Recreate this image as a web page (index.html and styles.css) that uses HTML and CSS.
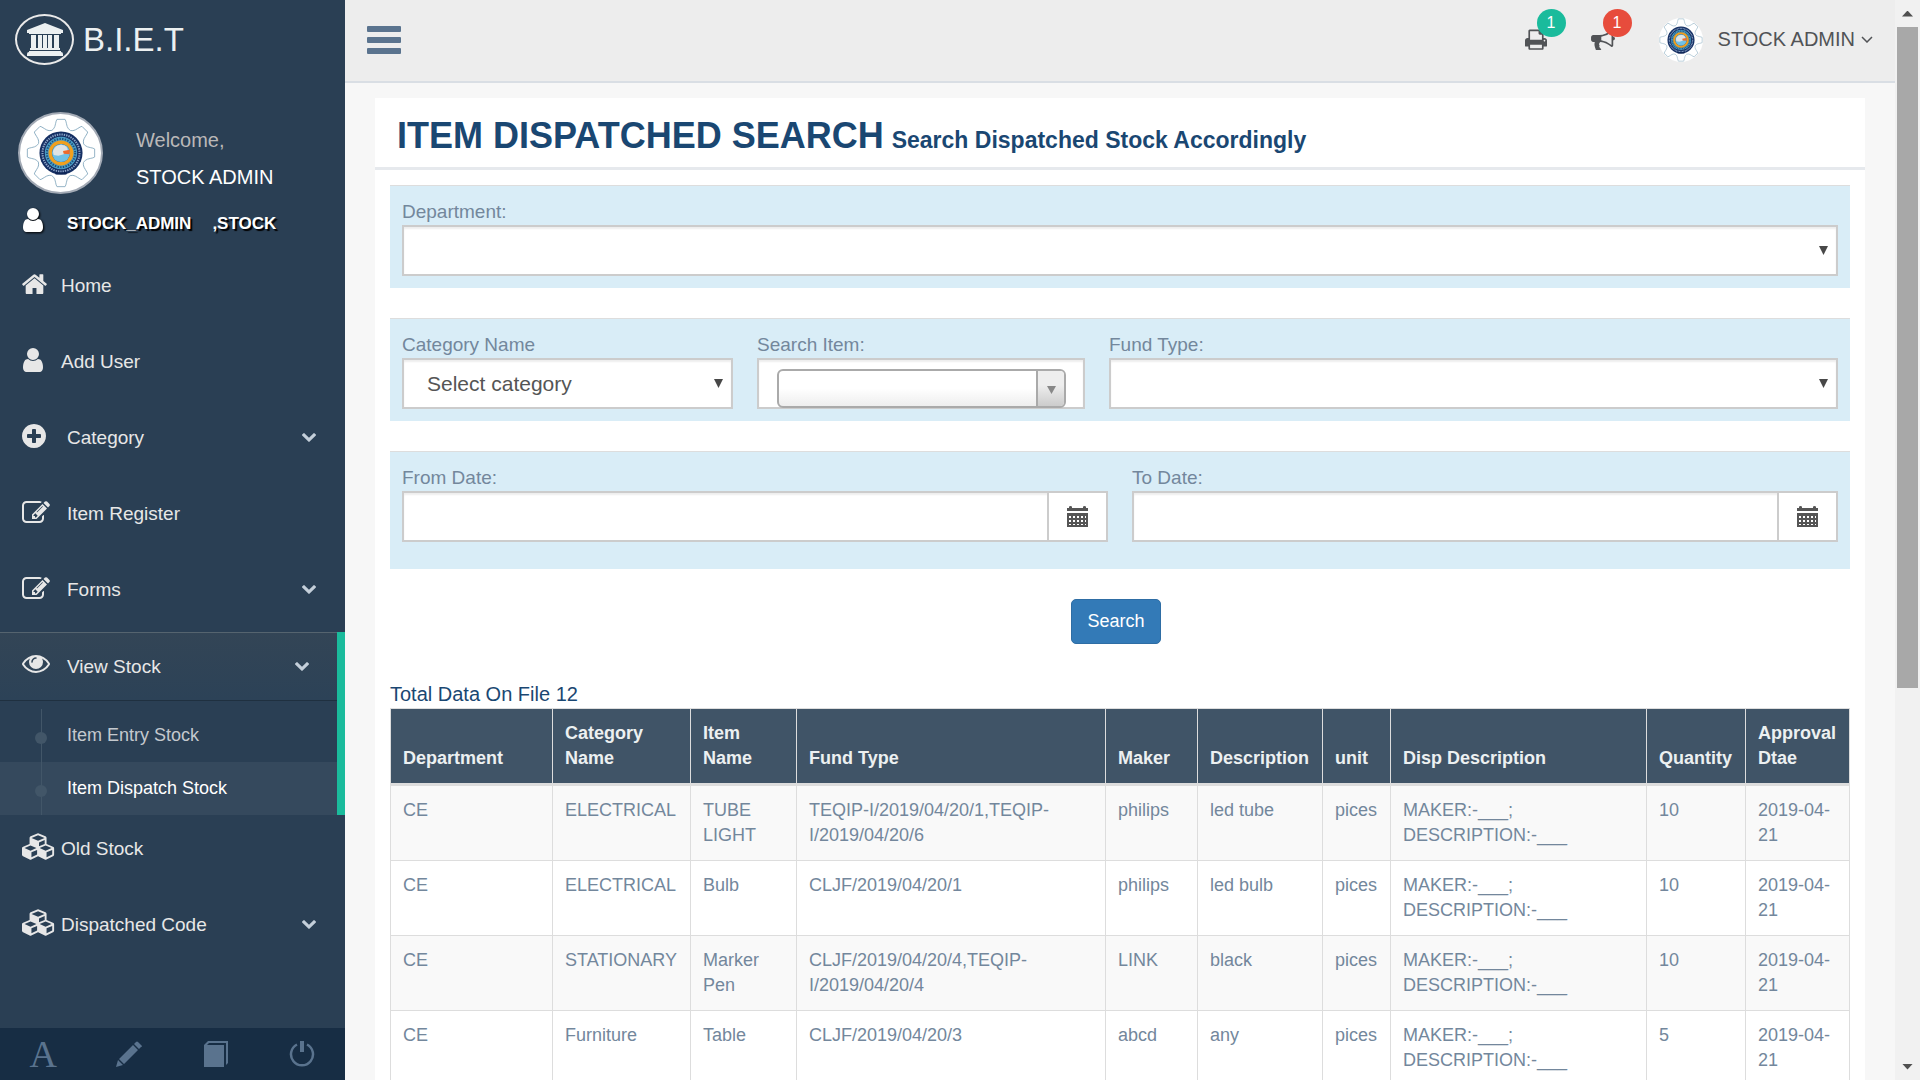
FILE: index.html
```html
<!DOCTYPE html>
<html lang="en">
<head>
<meta charset="utf-8">
<title>Item Dispatched Search</title>
<link rel="stylesheet" href="styles.css">
</head>
<body>
<svg class="sprite" aria-hidden="true">
  <symbol id="crest" viewBox="-52 -52 104 104">
    <g fill="none" stroke="#8fb0c4" stroke-width="1.4">
      <path id="tooth" d="M-11-36C-8-39-8-48-6-50H6C8-48 8-39 11-36Q14-32 17.700-33.200"/>
      <use href="#tooth" transform="rotate(45)"/><use href="#tooth" transform="rotate(90)"/>
      <use href="#tooth" transform="rotate(135)"/><use href="#tooth" transform="rotate(180)"/>
      <use href="#tooth" transform="rotate(225)"/><use href="#tooth" transform="rotate(270)"/>
      <use href="#tooth" transform="rotate(315)"/>
    </g>
    <circle r="32" fill="#152f63"/>
    <circle r="27.500" fill="none" stroke="#8ea6c8" stroke-width="3" stroke-dasharray="2 1.500"/>
    <circle r="21" fill="none" stroke="#4a9cc4" stroke-width="6"/>
    <circle r="21" fill="none" stroke="#1d4f7c" stroke-width="3" stroke-dasharray="2 2"/>
    <circle r="16" fill="none" stroke="#f0a01e" stroke-width="5"/>
    <circle r="13.500" fill="#6fc0e6"/>
    <path d="M-12-3Q-8-13 2-12Q10-11 10-4L4 2L-4 4L-11 3z" fill="#dfe3e4"/>
    <path d="M3-3L13-5V2L4 1z" fill="#ef6a2c"/>
    <path d="M-9 27Q0 31 9 27L8 32H-8z" fill="#0d2456"/>
  </symbol>
  <symbol id="i-user" viewBox="256 128 1280 1536"><path d="M1536 1399q0 109-62.5 187t-150.5 78h-854q-88 0-150.5-78t-62.5-187q0-85 8.500-160.500t31.500-152 58.500-131 94-89 134.500-34.500q131 128 313 128t313-128q76 0 134.500 34.500t94 89 58.500 131 31.500 152 8.500 160.500zm-256-887q0 159-112.500 271.500t-271.500 112.500-271.500-112.500-112.500-271.500 112.500-271.500 271.500-112.500 271.500 112.500 112.500 271.500z"/></symbol>
  <symbol id="i-home" viewBox="80 240 1632 1296"><path d="M1472 992v480q0 26-19 45t-45 19h-384v-384h-256v384h-384q-26 0-45-19t-19-45v-480q0-1 .5-3t.5-3l575-474 575 474q1 2 1 6zm223-69l-62 74q-8 9-21 11h-3q-13 0-21-7l-692-577-692 577q-12 8-24 7-13-2-21-11l-62-74q-8-10-7-23.500t11-21.500l719-599q32-26 76-26t76 26l244 204v-195q0-14 9-23t23-9h192q14 0 23 9t9 23v408l219 182q10 8 11 21.500t-7 23.500z"/></symbol>
  <symbol id="i-plus" viewBox="128 128 1536 1536"><path d="M1344 960v-128q0-26-19-45t-45-19h-256v-256q0-26-19-45t-45-19h-128q-26 0-45 19t-19 45v256h-256q-26 0-45 19t-19 45v128q0 26 19 45t45 19h256v256q0 26 19 45t45 19h128q26 0 45-19t19-45v-256h256q26 0 45-19t19-45zm320-64q0 209-103 385.500t-279.500 279.500-385.500 103-385.500-103-279.500-279.500-103-385.500 103-385.500 279.500-279.500 385.500-103 385.500 103 279.500 279.500 103 385.500z"/></symbol>
  <symbol id="i-edit" viewBox="0 128 1792 1408"><path d="M888 1184l116-116-152-152-116 116v56h96v96h56zm440-720q-16-16-33 1l-350 350q-17 17-1 33t33-1l350-350q17-17 1-33zm80 594v190q0 119-84.500 203.500t-203.500 84.500h-832q-119 0-203.500-84.500t-84.500-203.500v-832q0-119 84.500-203.500t203.500-84.500h832q63 0 117 25 15 7 18 23 3 17-9 29l-49 49q-14 14-32 8-23-6-45-6h-832q-66 0-113 47t-47 113v832q0 66 47 113t113 47h832q66 0 113-47t47-113v-126q0-13 9-22l64-64q15-15 35-7t20 29zm-96-738l288 288-672 672h-288v-288zm444 132l-92 92-288-288 92-92q28-28 68-28t68 28l152 152q28 28 28 68t-28 68z"/></symbol>
  <symbol id="i-eye" viewBox="0 384 1792 1152"><path d="M1664 960q-152-236-381-353 61 104 61 225 0 185-131.500 316.500t-316.500 131.500-316.500-131.500-131.500-316.500q0-121 61-225-229 117-381 353 133 205 333.500 326.500t434.500 121.500 434.500-121.500 333.500-326.500zm-720-384q0-20-14-34t-34-14q-125 0-214.500 89.500t-89.500 214.500q0 20 14 34t34 14 34-14 14-34q0-86 61-147t147-61q20 0 34-14t14-34zm848 384q0 34-20 69-140 230-376.500 368.500t-499.500 138.500-499.500-139-376.500-368q-20-35-20-69t20-69q140-229 376.500-368t499.500-139 499.500 139 376.500 368q20 35 20 69z"/></symbol>
  <symbol id="i-cubes" viewBox="0 0 2304 1792"><path d="M640 1632l384-192v-314l-384 164v342zm-64-454l404-173-404-173-404 173zm1088 454l384-192v-314l-384 164v342zm-64-454l404-173-404-173-404 173zm-448-293l384-165v-266l-384 164v267zm-64-379l441-189-441-189-441 189zm1088 518v416q0 36-19 67t-52 47l-448 224q-25 14-57 14t-57-14l-448-224q-4-2-7-4-2 2-7 4l-448 224q-25 14-57 14t-57-14l-448-224q-33-16-52-47t-19-67v-416q0-38 21.500-70t56.500-48l434-186v-400q0-38 21.500-70t56.500-48l448-192q23-10 50-10t50 10l448 192q35 16 56.500 48t21.500 70v400l434 186q36 16 57 48t21 70z"/></symbol>
  <symbol id="i-chevron" viewBox="90 532 1612 1036"><path d="M1683 808l-742 741q-19 19-45 19t-45-19l-742-741q-19-19-19-45.500t19-45.500l166-165q19-19 45-19t45 19l531 531 531-531q19-19 45-19t45 19l166 165q19 19 19 45.500t-19 45.500z"/></symbol>
  <symbol id="i-calendar" viewBox="0 0 21 21"><path fill-rule="evenodd" d="M0 2h2V1q0-1 1.500-1T5 1v1h11V1q0-1 1.500-1T19 1v1h2v3H0zM0 7h21v14H0zM2 10v2h2v-2zm4 0v2h2v-2zm4 0v2h2v-2zm4 0v2h2v-2zm4 0v2h1v-2zM2 14v2h2v-2zm4 0v2h2v-2zm4 0v2h2v-2zm4 0v2h2v-2zm4 0v2h1v-2zM2 18v1h2v-1zm4 0v1h2v-1zm4 0v1h2v-1zm4 0v1h2v-1zm4 0v1h1v-1z"/></symbol>
</svg>

<div class="app">
  <aside class="sidebar">
    <a class="brand" href="#">
      <span class="brand-mark">
        <svg width="36" height="33" viewBox="0 0 36 33" aria-hidden="true"><path d="M18 0L36 7V10H34V11H2V10H0V7zM4 12H9V25H11V12H15V25H16V12H20V25H21V12H25V25H27V12H32V25H33V27H3V25H4zM2 28H34V29Q36 29 36 31V33H0V31Q0 29 2 29z"/></svg>
      </span>
      <span>B.I.E.T</span>
    </a>

    <section class="profile">
      <span class="profile-pic"><svg width="70" height="70" role="img" aria-label="Institute crest"><use href="#crest"/></svg></span>
      <div class="profile-text">
        <p class="welcome">Welcome,</p>
        <p>STOCK ADMIN</p>
      </div>
    </section>
    <div class="user-line">
      <svg class="icon" width="22" height="24" aria-hidden="true"><use href="#i-user"/></svg>
      <span>STOCK_ADMIN</span><span class="role">,STOCK</span>
    </div>

    <nav>
      <ul class="menu">
        <li><a class="item" href="#"><span class="glyph"><svg width="25" height="20"><use href="#i-home"/></svg></span>Home</a></li>
        <li><a class="item" href="#"><span class="glyph"><svg width="22" height="24"><use href="#i-user"/></svg></span>Add User</a></li>
        <li><a class="item indent" href="#"><span class="glyph"><svg width="24" height="24"><use href="#i-plus"/></svg></span>Category<svg class="chevron" width="14" height="9"><use href="#i-chevron"/></svg></a></li>
        <li><a class="item indent" href="#"><span class="glyph"><svg width="28" height="22"><use href="#i-edit"/></svg></span>Item Register</a></li>
        <li><a class="item indent" href="#"><span class="glyph"><svg width="28" height="22"><use href="#i-edit"/></svg></span>Forms<svg class="chevron" width="14" height="9"><use href="#i-chevron"/></svg></a></li>
        <li class="active"><a class="item indent" href="#"><span class="glyph"><svg width="28" height="18"><use href="#i-eye"/></svg></span>View Stock<svg class="chevron" width="14" height="9"><use href="#i-chevron"/></svg></a>
          <ul class="submenu">
            <li><a href="#">Item Entry Stock</a></li>
            <li class="current"><a href="#" aria-current="page">Item Dispatch Stock</a></li>
          </ul>
        </li>
        <li><a class="item" href="#"><span class="glyph"><svg width="34" height="27"><use href="#i-cubes"/></svg></span>Old Stock</a></li>
        <li><a class="item" href="#"><span class="glyph"><svg width="34" height="27"><use href="#i-cubes"/></svg></span>Dispatched Code<svg class="chevron" width="14" height="9"><use href="#i-chevron"/></svg></a></li>
      </ul>
    </nav>

    <div class="side-footer">
      <a href="#" aria-label="Font" class="font-icon">A</a>
      <a href="#" aria-label="Edit"><svg width="26" height="26" viewBox="0 0 26 26"><path d="M0 26L2 19L7 24zM3 18L17 4L22 9L8 23zM18 3L20 1Q21 0 22 1L26 5Q26 6 25 6L23 8z"/></svg></a>
      <a href="#" aria-label="Pages"><svg width="24" height="26" viewBox="0 0 24 26"><path d="M0 4L4 0H24V22L22 24V2H5L3 4H20V26H0z"/></svg></a>
      <a href="#" aria-label="Logout"><svg width="26" height="26" viewBox="0 0 26 26"><path d="M8 3.500A11 11 0 1 0 18 3.500" fill="none" stroke="currentColor" stroke-width="2.500"/><rect x="11" y="0" width="4" height="11"/></svg></a>
    </div>
  </aside>

  <div class="page">
    <header class="topbar">
      <button class="toggle" type="button" aria-label="Toggle menu"><svg width="34" height="28" viewBox="0 0 34 28"><rect width="34" height="6" rx="1"/><rect y="11" width="34" height="6" rx="1"/><rect y="22" width="34" height="6" rx="1"/></svg></button>
      <div class="tools">
        <a class="notice" href="#" aria-label="Print queue"><svg width="22" height="21" viewBox="64 96 1664 1568"><path d="M448 1536h896v-256h-896v256zm0-640h896v-384h-160q-40 0-68-28t-28-68v-160h-640v640zm1152 64q0-26-19-45t-45-19-45 19-19 45 19 45 45 19 45-19 19-45zm128 0v416q0 13-9.500 22.500t-22.500 9.500h-224v160q0 40-28 68t-68 28h-960q-40 0-68-28t-28-68v-160h-224q-13 0-22.500-9.500t-9.500-22.500v-416q0-79 56.500-135.500t135.500-56.500h64v-544q0-40 28-68t68-28h672q40 0 88 20t76 48l152 152q28 28 48 76t20 88v256h64q79 0 135.500 56.500t56.500 135.500z"/></svg><span class="badge green">1</span></a>
        <a class="notice" href="#" aria-label="Announcements"><svg width="24" height="20" viewBox="0 128 1792 1500"><path d="M1664 640q53 0 90.500 37.500t37.500 90.500-37.500 90.500-90.500 37.500v384q0 52-38 90t-90 38q-417-347-812-380-58 19-91 66t-31 100.500 40 92.500q-20 33-23 65.500t6 58 33.500 55 48 50 61.500 50.500q-29 58-111.500 83t-168.500 11.500-132-55.500q-7-23-29.500-87.500t-32-94.500-23-89-15-101 3.500-98.500 22-110.500h-122q-66 0-113-47t-47-113v-192q0-66 47-113t113-47h480q435 0 896-384 52 0 90 38t38 90v384zm-128 604v-954q-394 302-768 343v270q377 42 768 341z"/></svg><span class="badge red">1</span></a>
        <a class="account" href="#"><span class="avatar"><svg width="44" height="44" aria-hidden="true"><use href="#crest"/></svg></span>STOCK ADMIN<svg class="angle" width="12" height="7" viewBox="0 0 12 7"><path d="M1 1L6 6L11 1" fill="none" stroke="currentColor" stroke-width="1.500"/></svg></a>
      </div>
    </header>

    <main class="content">
      <section class="panel">
        <header class="panel-head"><h1>ITEM DISPATCHED SEARCH <small>Search Dispatched Stock Accordingly</small></h1></header>
        <div class="panel-body">
          <form>
            <div class="band">
              <div class="field"><label for="dept">Department:</label><div class="pick"><select id="dept"><option></option></select></div></div>
            </div>
            <div class="band band-items">
              <div class="field"><label for="cat">Category Name</label><div class="pick"><select id="cat"><option>Select category</option></select></div></div>
              <div class="field"><label for="item">Search Item:</label><div class="control combo"><div class="combo-box"><select id="item"><option></option></select></div></div></div>
              <div class="field"><label for="fund">Fund Type:</label><div class="pick"><select id="fund"><option></option></select></div></div>
            </div>
            <div class="band band-dates">
              <div class="field"><label for="from">From Date:</label><div class="date"><input id="from" type="text"><button type="button" aria-label="Pick from date"><svg width="21" height="21"><use href="#i-calendar"/></svg></button></div></div>
              <div class="field"><label for="to">To Date:</label><div class="date"><input id="to" type="text"><button type="button" aria-label="Pick to date"><svg width="21" height="21"><use href="#i-calendar"/></svg></button></div></div>
            </div>
            <div class="actions"><button class="btn" type="submit">Search</button></div>
          </form>

          <table class="data">
            <caption>Total Data On File 12</caption>
            <colgroup><col class="c-dept"><col class="c-cat"><col class="c-item"><col class="c-fund"><col class="c-maker"><col class="c-desc"><col class="c-unit"><col class="c-disp"><col class="c-qty"><col class="c-date"></colgroup>
            <thead><tr><th>Department</th><th>Category Name</th><th>Item Name</th><th>Fund Type</th><th>Maker</th><th>Description</th><th>unit</th><th>Disp Description</th><th>Quantity</th><th>Approval Dtae</th></tr></thead>
            <tbody>
              <tr><td>CE</td><td>ELECTRICAL</td><td>TUBE LIGHT</td><td>TEQIP-I/2019/04/20/1,TEQIP-I/2019/04/20/6</td><td>philips</td><td>led tube</td><td>pices</td><td>MAKER:-___; DESCRIPTION:-___</td><td>10</td><td>2019-04-21</td></tr>
              <tr><td>CE</td><td>ELECTRICAL</td><td>Bulb</td><td>CLJF/2019/04/20/1</td><td>philips</td><td>led bulb</td><td>pices</td><td>MAKER:-___; DESCRIPTION:-___</td><td>10</td><td>2019-04-21</td></tr>
              <tr><td>CE</td><td>STATIONARY</td><td>Marker Pen</td><td>CLJF/2019/04/20/4,TEQIP-I/2019/04/20/4</td><td>LINK</td><td>black</td><td>pices</td><td>MAKER:-___; DESCRIPTION:-___</td><td>10</td><td>2019-04-21</td></tr>
              <tr><td>CE</td><td>Furniture</td><td>Table</td><td>CLJF/2019/04/20/3</td><td>abcd</td><td>any</td><td>pices</td><td>MAKER:-___; DESCRIPTION:-___</td><td>5</td><td>2019-04-21</td></tr>
            </tbody>
          </table>
        </div>
      </section>
    </main>
  </div>

  <div class="scrollbar" aria-hidden="true">
    <span class="arrow up"></span>
    <div class="track"><div class="thumb"></div></div>
    <span class="arrow down"></span>
  </div>
</div>
</body>
</html>
```
FILE: styles.css
```css
* { box-sizing: border-box; }

body {
  margin: 0;
  font: 19px/27px "Liberation Sans", Arial, sans-serif;
  color: #73879c;
  background: #f7f7f7;
}

ul { margin: 0; padding: 0; list-style: none; }
p { margin: 0; }
a { color: inherit; text-decoration: none; }
svg { fill: currentColor; flex: none; }
.sprite { display: none; }

.app { display: flex; height: 100vh; overflow: hidden; }

/* Sidebar */
.sidebar {
  display: flex;
  flex-direction: column;
  flex: none;
  width: 345px;
  background: #2a3f54;
  color: #e7e7e7;
}
.brand {
  display: flex;
  align-items: center;
  gap: 9px;
  height: 79px;
  padding: 0 15px;
  font-size: 33px;
  color: #ecf0f1;
}
.brand-mark {
  display: flex;
  align-items: center;
  justify-content: center;
  width: 59px;
  height: 51px;
  border: 2px solid #eaeaea;
  border-radius: 50%;
}
.profile { display: flex; gap: 33px; margin-top: 33px; padding-left: 18px; }
.profile-pic {
  display: flex;
  align-items: center;
  justify-content: center;
  width: 85px;
  height: 82px;
  border: 2px solid #a3aab5;
  border-radius: 50%;
  background: #fff;
}
.profile-text { padding-top: 10px; font-size: 20px; line-height: 37px; color: #fff; }
.welcome { color: #bab8b8; }
.user-line {
  display: flex;
  align-items: center;
  height: 55px;
  padding-left: 22px;
  font-size: 17px;
  font-weight: bold;
  color: #fff;
  text-shadow: 2px 2px 1px #000;
}
.user-line .icon { margin: 0 23px 8px 0; filter: drop-shadow(1px 1px 1px #000); }
.role { margin-left: 21px; }

.menu { padding-top: 1px; }
.menu > li { margin-bottom: 9px; }
.item { display: flex; align-items: center; height: 67px; padding: 0 29px 0 22px; }
.glyph { display: flex; width: 39px; padding-bottom: 4px; }
.indent .glyph { width: 45px; }
.chevron { margin-left: auto; color: #c4cfda; }

.menu > .active { margin: 0; border-right: 8px solid #1abb9c; }
.active > .item {
  height: 68px;
  padding-right: 28px;
  background: linear-gradient(#334556, #2c4257);
  box-shadow: 0 1px 0 #1f3040, inset 0 1px 0 #55646f;
}
.submenu { padding-top: 9px; font-size: 18px; }
.submenu li { position: relative; }
.submenu a { display: block; padding-left: 67px; line-height: 53px; color: #c4c9ce; }
.submenu .current { background: #35495d; }
.submenu .current a { color: #fff; }
.submenu li::before {
  content: "";
  position: absolute;
  top: 0;
  bottom: 0;
  left: 41px;
  width: 1px;
  background: #425668;
}
.submenu li::after {
  content: "";
  position: absolute;
  top: 23px;
  left: 35px;
  width: 12px;
  height: 12px;
  border-radius: 50%;
  background: #425668;
}
.side-footer {
  display: grid;
  grid-template-columns: repeat(4, 1fr);
  height: 52px;
  margin-top: auto;
  background: #172d44;
  color: #5a738e;
}
.side-footer a { display: flex; align-items: center; justify-content: center; }
.font-icon { font: 38px/52px "Liberation Serif", serif; }

/* Page column */
.page { flex: 1; min-width: 0; overflow: auto; scrollbar-width: none; }
.topbar {
  display: flex;
  align-items: center;
  justify-content: space-between;
  height: 83px;
  padding: 0 22px 2px;
  border-bottom: 2px solid #d9dee4;
  background: #ededed;
  color: #515356;
}
.toggle { display: flex; padding: 0; border: 0; background: none; color: #5a738e; }
.tools { display: flex; align-items: center; gap: 44px; }
.notice { position: relative; display: flex; }
.badge {
  position: absolute;
  left: 12px;
  bottom: 13px;
  width: 29px;
  border-radius: 50%;
  font-size: 16px;
  line-height: 28px;
  text-align: center;
  color: #fff;
}
.green { background: #1abb9c; }
.red { background: #e74c3c; }
.account { display: flex; align-items: center; font-size: 20px; }
.avatar { display: flex; margin-right: 15px; border-radius: 50%; background: #fff; }
.angle { margin-left: 6px; }

.content { padding: 15px 30px; }
.panel { background: #fff; }
.panel-head { padding: 6px 22px 0; border-bottom: 3px solid #e6e9ed; }
h1 { margin: 0; font-size: 36px; line-height: 63px; color: #1a4772; }
h1 small { margin-left: -2px; font-size: 23px; line-height: 27px; }
.panel-body { padding: 15px; }

/* Search form */
.band {
  display: grid;
  margin-bottom: 30px;
  border-top: 1px solid #ddd;
  background: #d9edf7;
}
.band-items { grid-template-columns: 355fr 352fr 753fr; }
.band-dates { grid-template-columns: 1fr 1fr; padding-bottom: 15px; }
.field { padding: 12px; }
.field label { display: block; }
.pick, .combo-box { position: relative; }
.pick select, .control, .date {
  width: 100%;
  height: 51px;
  border: 2px solid #ccc;
  border-radius: 0;
  background: #fff;
  box-shadow: inset 0 2px 2px #eee;
}
select { display: block; appearance: none; margin: 0; }
.pick select { padding: 0 23px; font: 21px "Liberation Sans", Arial, sans-serif; color: #555; }
.pick::after, .combo-box::after {
  content: "";
  position: absolute;
  top: 21px;
  right: 10px;
  width: 9px;
  height: 9px;
  clip-path: polygon(0 0, 100% 0, 50% 100%);
  background: #484848;
  pointer-events: none;
}
.combo { padding: 9px 17px 0 18px; }
.combo-box {
  height: 39px;
  border: 2px solid #aaa;
  border-radius: 6px;
  background: linear-gradient(#fff 50%, #eee);
  overflow: hidden;
}
.combo-box::before {
  content: "";
  position: absolute;
  top: 0;
  right: 0;
  bottom: 0;
  width: 26px;
  border-left: 2px solid #aaa;
  background: linear-gradient(#eee 40%, #ccc);
}
.combo-box::after { top: 15px; right: 8px; height: 8px; background: #888; }
.combo-box select { width: 100%; height: 35px; border: 0; background: none; }
.date { display: flex; }
.date input { flex: 1; min-width: 0; border: 0; background: none; padding: 0 18px; font: inherit; }
.date button {
  display: flex;
  align-items: center;
  justify-content: center;
  width: 59px;
  border: 0;
  border-left: 2px solid #ccc;
  background: #fff;
  color: #555;
}
.actions { display: flex; justify-content: center; padding-right: 8px; }
.btn {
  height: 45px;
  padding: 0 15px;
  border: 1px solid #2e6da4;
  border-radius: 5px;
  background: #337ab7;
  color: #fff;
  font: 18px "Liberation Sans", Arial, sans-serif;
}

/* Results */
.data {
  width: 100%;
  margin-top: 37px;
  table-layout: fixed;
  border-collapse: collapse;
  font-size: 18px;
  line-height: 25px;
}
.data caption { font-size: 20px; line-height: 27px; text-align: left; color: #1a4772; }
.data th, .data td { padding: 12px; border: 1px solid #ddd; text-align: left; vertical-align: top; }
.data th {
  border-bottom-width: 3px;
  background: #405467;
  color: #ecf0f1;
  vertical-align: bottom;
}
.data tbody tr:nth-child(odd) { background: #f9f9f9; }
.c-dept { width: 162px; }
.c-cat { width: 138px; }
.c-item { width: 106px; }
.c-fund { width: 309px; }
.c-maker { width: 92px; }
.c-desc { width: 125px; }
.c-unit { width: 68px; }
.c-disp { width: 256px; }
.c-qty { width: 99px; }
.c-date { width: 104px; }

/* Scrollbar */
.scrollbar { display: flex; flex-direction: column; flex: none; width: 25px; background: #f1f1f1; }
.arrow { display: flex; align-items: center; justify-content: center; height: 27px; }
.arrow::before { content: ""; width: 11px; height: 6px; background: #505050; }
.up::before { clip-path: polygon(50% 0, 100% 100%, 0 100%); }
.down::before { clip-path: polygon(0 0, 100% 0, 50% 100%); }
.track { flex: 1; padding: 0 2px; }
.thumb { height: 64.4%; background: #a8a8a8; }
```
